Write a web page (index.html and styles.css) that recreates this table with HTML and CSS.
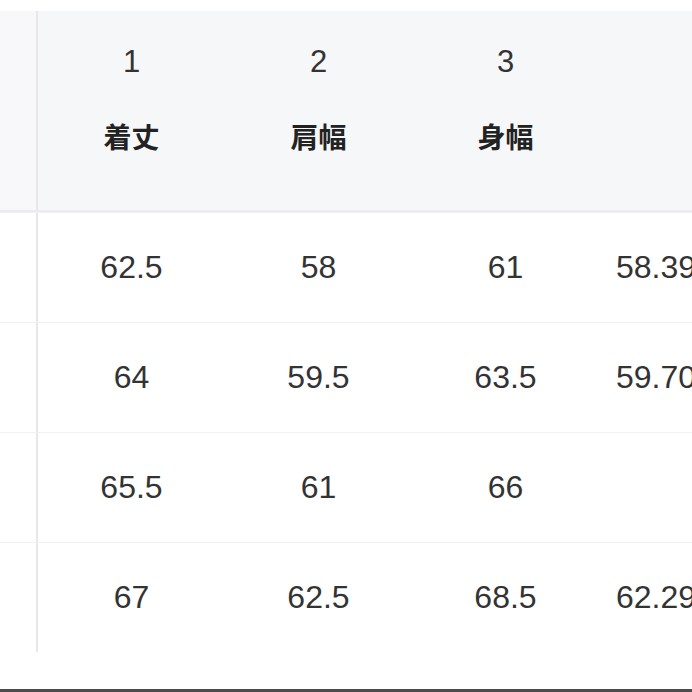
FILE: index.html
```html
<!DOCTYPE html>
<html lang="ja">
<head>
<meta charset="utf-8">
<link rel="stylesheet" href="styles.css">
</head>
<body>
<div class="page">
  <div class="chart">
    <div class="row head">
      <div class="side"></div>
      <div class="cell"><span class="num">1</span><span class="label">着丈</span></div>
      <div class="cell"><span class="num">2</span><span class="label">肩幅</span></div>
      <div class="cell"><span class="num">3</span><span class="label">身幅</span></div>
      <div class="cell last"></div>
    </div>
    <div class="row">
      <div class="side"></div>
      <div class="cell">62.5</div>
      <div class="cell">58</div>
      <div class="cell">61</div>
      <div class="cell last">58.39</div>
    </div>
    <div class="row">
      <div class="side"></div>
      <div class="cell">64</div>
      <div class="cell">59.5</div>
      <div class="cell">63.5</div>
      <div class="cell last">59.70</div>
    </div>
    <div class="row">
      <div class="side"></div>
      <div class="cell">65.5</div>
      <div class="cell">61</div>
      <div class="cell">66</div>
      <div class="cell last"></div>
    </div>
    <div class="row">
      <div class="side"></div>
      <div class="cell">67</div>
      <div class="cell">62.5</div>
      <div class="cell">68.5</div>
      <div class="cell last">62.29</div>
    </div>
  </div>
  <div class="bottom-bar"></div>
</div>
</body>
</html>
```

FILE: styles.css
```css
html, body {
  margin: 0;
  padding: 0;
  background: #ffffff;
}
.page {
  width: 692px;
  height: 692px;
  overflow: hidden;
  padding-top: 11px;
  box-sizing: border-box;
  display: flex;
  flex-direction: column;
  font-family: "Liberation Sans", "Noto Sans CJK JP", Arial, sans-serif;
  color: #333333;
}
.chart {
  display: flex;
  flex-direction: column;
  width: 692px;
  overflow: hidden;
}
.row {
  display: grid;
  grid-template-columns: 38px 187px 187px 187px 187px;
  height: 110px;
  border-top: 1px solid #f1f1f2;
  box-sizing: border-box;
}
.row.head {
  height: 201px;
  border-top: none;
  border-bottom: 2px solid #ececef;
}
.side {
  border-right: 2px solid #e7e7e9;
}
.head .side {
  background: #f8f8fa;
}
.head .cell {
  background: #f6f7f9;
  flex-direction: column;
  justify-content: flex-start;
  padding-top: 33px;
}
.cell {
  display: flex;
  align-items: center;
  justify-content: center;
  font-size: 32px;
  white-space: nowrap;
}
.cell.last {
  justify-content: flex-start;
  padding-left: 17px;
}
.num {
  line-height: 36px;
  font-size: 31px;
  color: #333333;
}
.label {
  margin-top: 38px;
  line-height: 36px;
  font-size: 28px;
  font-weight: bold;
  color: #222222;
  font-family: "Noto Sans CJK JP", sans-serif;
}
.bottom-bar {
  margin-top: 37px;
  height: 3px;
  background: #4d4d4d;
}
```
